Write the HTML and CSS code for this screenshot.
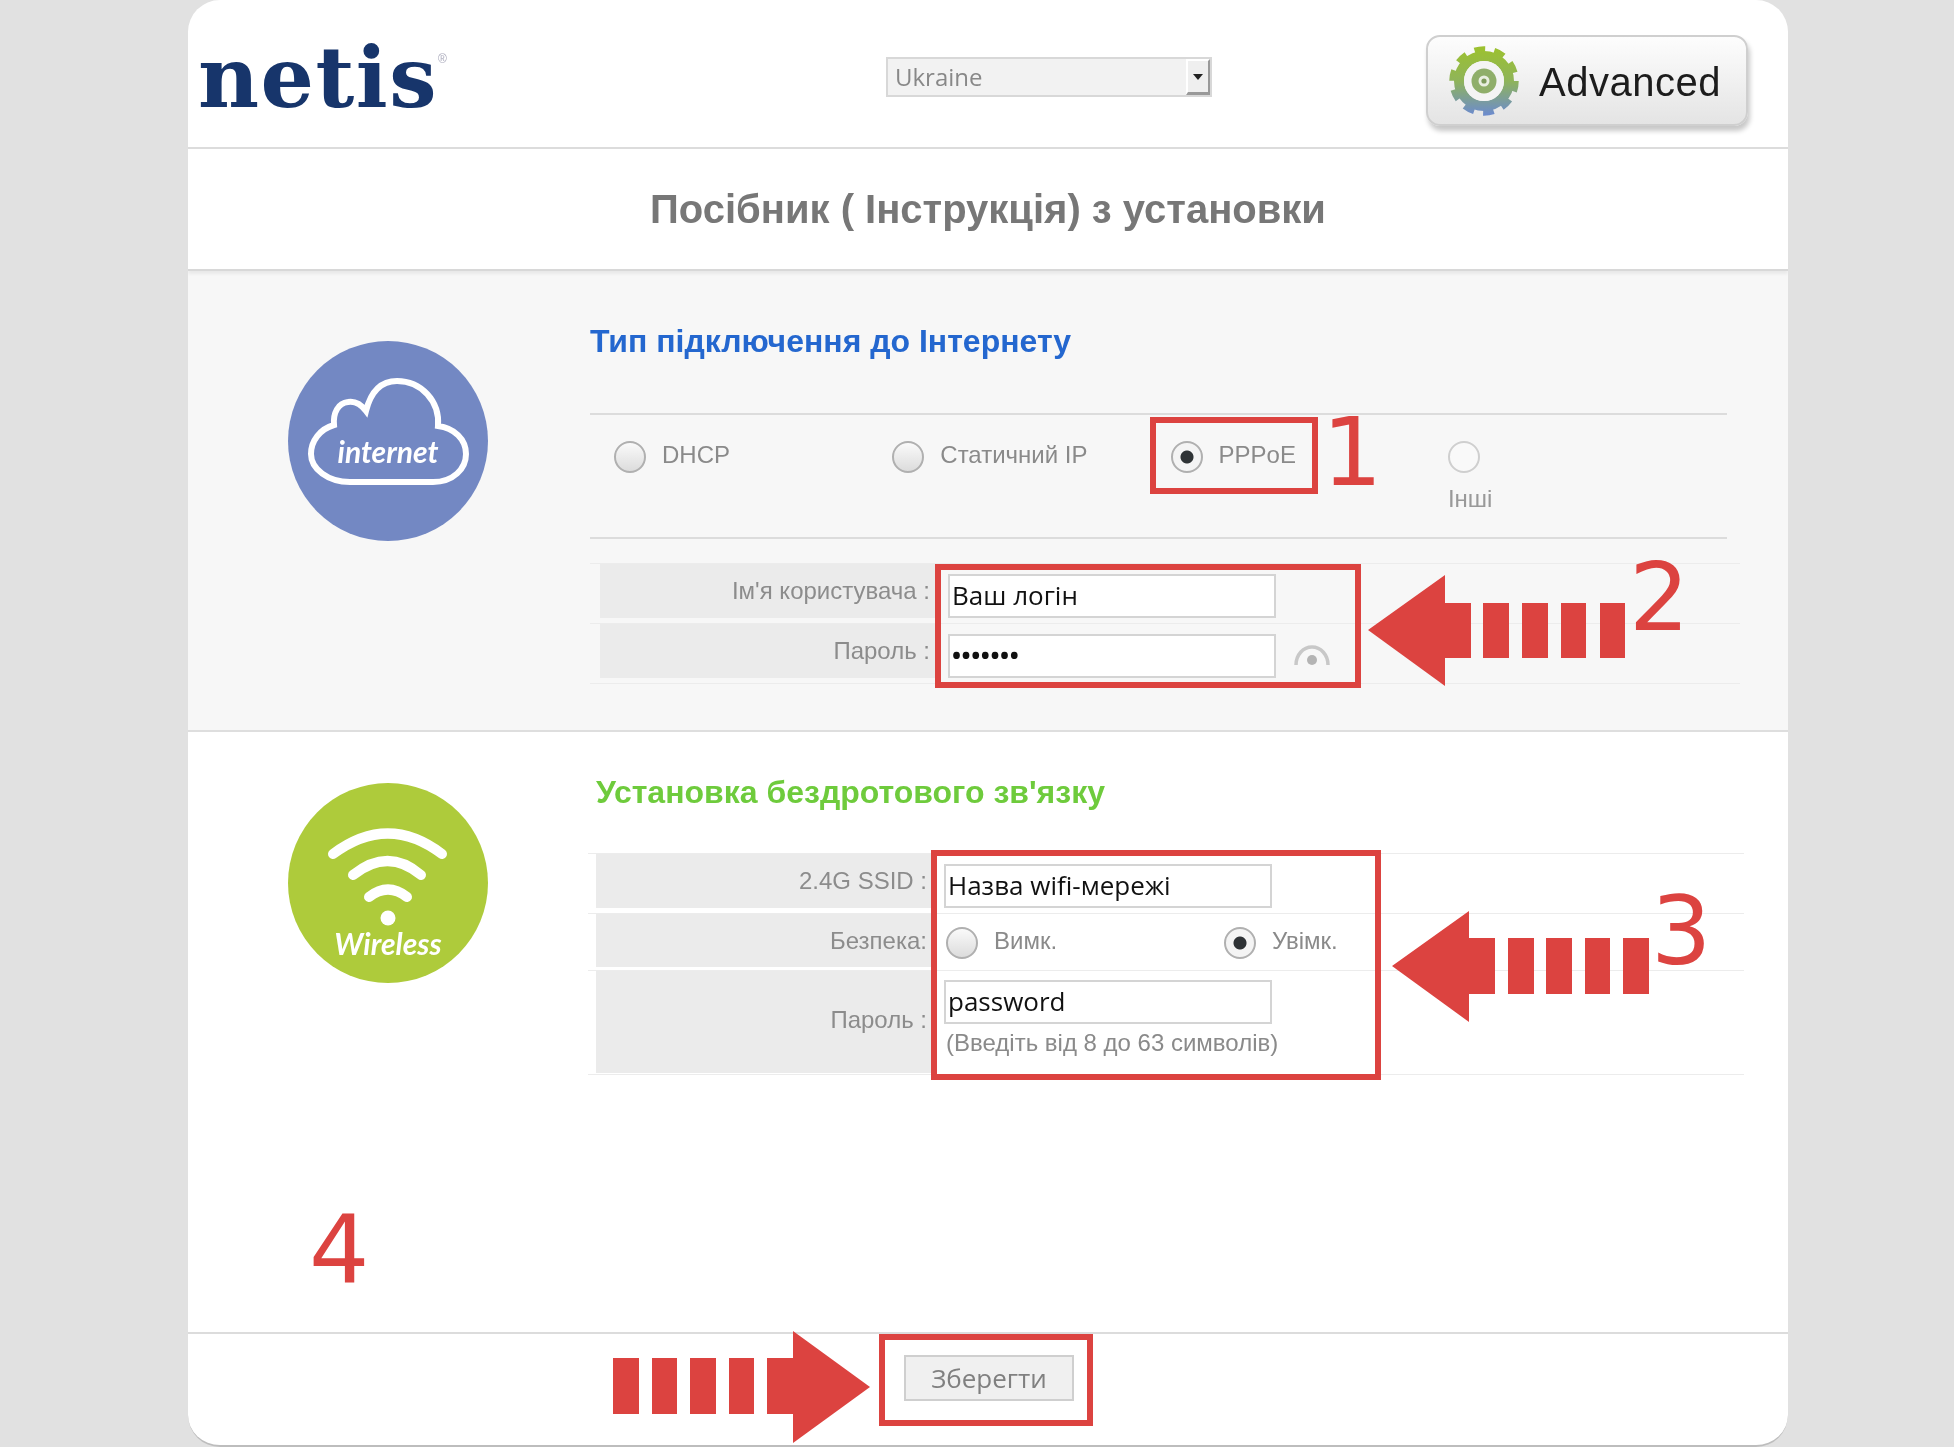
FILE: index.html
```html
<!DOCTYPE html>
<html lang="uk">
<head>
<meta charset="utf-8">
<title>netis</title>
<link rel="stylesheet" href="styles.css">
</head>
<body>
<main class="card">
  <header class="top">
    <div class="logo">netis<sup class="reg">®</sup></div>
    <div class="select"><span class="select-text">Ukraine</span><span class="select-btn"><i class="caret"></i></span></div>
    <button class="advanced" type="button">
      <svg class="gear" viewBox="0 0 70 70" aria-hidden="true">
        <defs>
          <linearGradient id="gearfill" gradientUnits="userSpaceOnUse" x1="0" y1="2" x2="0" y2="68">
            <stop offset="0" stop-color="#9cc130"/>
            <stop offset=".5" stop-color="#8fb45a"/>
            <stop offset="1" stop-color="#6d8ccb"/>
          </linearGradient>
        </defs>
        <circle cx="35" cy="35" r="31" fill="none" stroke="url(#gearfill)" stroke-width="7.5" stroke-dasharray="10.5 9"/>
        <circle cx="35" cy="35" r="25" fill="none" stroke="url(#gearfill)" stroke-width="10"/>
        <circle cx="35" cy="35" r="20" fill="#f4f4f4"/>
        <circle cx="35" cy="35" r="12.5" fill="#8fae6a"/>
        <circle cx="35" cy="35" r="5.5" fill="#e8eee0"/>
        <circle cx="35" cy="35" r="2.6" fill="#7d9a5c"/>
      </svg>
      <span class="advanced-text">Advanced</span>
    </button>
  </header>

  <h1 class="title">Посібник ( Інструкція) з установки</h1>

  <section class="panel panel-net">
    <svg class="badge" viewBox="0 0 200 200" aria-hidden="true">
      <circle cx="100" cy="100" r="100" fill="#7388c3"/>
      <path d="M62 141H145C165 141 178 128 178 113C178 98 166 87 150 85C152 60 133 40 109 40C94 40 83 50 78 70C72 62 66 60 60 61C50 62 45 72 46 84C32 88 23 100 23 113C23 128 40 141 62 141Z" fill="none" stroke="#fff" stroke-width="6"/>
      <text class="badge-text" x="100" y="122">internet</text>
    </svg>
    <div class="body body-net">
      <h2 class="heading heading-blue">Тип підключення до Інтернету</h2>
      <div class="modes">
        <label class="mode"><input class="radio" type="radio" name="wan"><span>DHCP</span></label>
        <label class="mode"><input class="radio" type="radio" name="wan"><span>Статичний IP</span></label>
        <label class="mode"><input class="radio" type="radio" name="wan" checked><span>PPPoE</span></label>
        <label class="mode mode-stack"><input class="radio radio-faint" type="radio" name="wan"><span>Інші</span></label>
      </div>
      <div class="rows">
        <div class="row row-net">
          <div class="key">Ім'я користувача :</div>
          <div class="val"><span class="field">Ваш логін</span></div>
        </div>
        <div class="row row-net">
          <div class="key">Пароль :</div>
          <div class="val val-eye">
            <span class="field field-dots">•••••••</span>
            <svg class="eye" viewBox="0 0 36 24" aria-hidden="true">
              <path d="M2 22C2 12 9 4 18 4S34 12 34 22" fill="none" stroke="#c8c8c8" stroke-width="3.5"/>
              <circle cx="18" cy="17" r="5" fill="#b4b4b4"/>
            </svg>
          </div>
        </div>
      </div>
    </div>
  </section>

  <section class="panel panel-wifi">
    <svg class="badge" viewBox="0 0 200 200" aria-hidden="true">
      <circle cx="100" cy="100" r="100" fill="#aecb3b"/>
      <g fill="none" stroke="#fff" stroke-width="10" stroke-linecap="round">
        <path d="M45 71Q100 30 154 71"/>
        <path d="M65 92Q100 64 133 92"/>
        <path d="M81 114Q100 99 119 114"/>
      </g>
      <circle cx="100" cy="135" r="7.5" fill="#fff"/>
      <text class="badge-text" x="100" y="172">Wireless</text>
    </svg>
    <div class="body body-wifi">
      <h2 class="heading heading-green">Установка бездротового зв'язку</h2>
      <div class="rows rows-wifi">
        <div class="row row-ssid">
          <div class="key">2.4G SSID :</div>
          <div class="val"><span class="field">Назва wifi-мережі</span></div>
        </div>
        <div class="row row-sec">
          <div class="key">Безпека:</div>
          <div class="val val-sec">
            <label class="mode mode-off"><input class="radio" type="radio" name="sec"><span>Вимк.</span></label>
            <label class="mode"><input class="radio" type="radio" name="sec" checked><span>Увімк.</span></label>
          </div>
        </div>
        <div class="row row-pass">
          <div class="key">Пароль :</div>
          <div class="val val-pass">
            <span class="field">password</span>
            <span class="hint">(Введіть від 8 до 63 символів)</span>
          </div>
        </div>
      </div>
    </div>
  </section>

  <footer class="bottom">
    <button class="save" type="button">Зберегти</button>
  </footer>

  <svg class="marks" viewBox="188 0 1600 1447" aria-hidden="true">
    <g fill="none" stroke="#dc4340" stroke-width="6">
      <rect x="1153" y="420" width="162" height="71"/>
      <rect x="938" y="567" width="420" height="118"/>
      <rect x="934" y="853" width="444" height="224"/>
      <rect x="882" y="1337" width="208" height="86"/>
    </g>
    <g fill="#dc4340">
      <path d="M1368 630L1445 575V603H1471V658H1445V686Z"/>
      <rect x="1483" y="603" width="26" height="55"/>
      <rect x="1522" y="603" width="26" height="55"/>
      <rect x="1561" y="603" width="25" height="55"/>
      <rect x="1600" y="603" width="25" height="55"/>
      <path d="M1392 966L1469 911V938H1495V994H1469V1022Z"/>
      <rect x="1508" y="938" width="26" height="56"/>
      <rect x="1546" y="938" width="26" height="56"/>
      <rect x="1585" y="938" width="25" height="56"/>
      <rect x="1623" y="938" width="26" height="56"/>
      <path d="M870 1387L793 1331V1358H767V1414H793V1443Z"/>
      <rect x="613" y="1358" width="26" height="56"/>
      <rect x="652" y="1358" width="25" height="56"/>
      <rect x="690" y="1358" width="26" height="56"/>
      <rect x="729" y="1358" width="25" height="56"/>
    </g>
  </svg>
  <span class="num num-1">1</span>
  <span class="num num-2">2</span>
  <span class="num num-3">3</span>
  <span class="num num-4">4</span>
</main>
</body>
</html>
```
FILE: styles.css
```css
* { box-sizing: border-box; }
html, body { margin: 0; height: 100%; }
body {
  background: #e1e1e1;
  overflow: hidden;
  font-family: "Liberation Sans", Arial, sans-serif;
  padding-left: 188px;
}
.card {
  position: relative;
  width: 1600px;
  height: 1447px;
  background: #fff;
  border-radius: 32px;
  overflow: hidden;
  display: flex;
  flex-direction: column;
  border-bottom: 2px solid #bdbdbd;
  filter: blur(.6px);
}

/* header */
.top {
  height: 149px;
  flex: none;
  border-bottom: 2px solid #dcdcdc;
  display: flex;
  align-items: flex-start;
}
.logo {
  width: 698px;
  padding: 28px 0 0 10px;
  font: 700 84px/100px "DejaVu Serif", serif;
  color: #17356b;
  letter-spacing: 1.5px;
  white-space: nowrap;
}
.reg {
  font: 400 12px/12px "Liberation Sans", sans-serif;
  color: #aab;
  vertical-align: 44px;
  letter-spacing: 0;
}
.select {
  width: 326px;
  height: 40px;
  margin-top: 57px;
  background: #f2f2f2;
  border: 2px solid #d8d8d8;
  display: flex;
  justify-content: space-between;
}
.select-text {
  font: 400 24px/36px "Open Sans", sans-serif;
  color: #888;
  padding-left: 7px;
}
.select-btn {
  width: 24px;
  height: 36px;
  background: #efefef;
  border-right: 2px solid #999;
  border-bottom: 3px solid #999;
  border-left: 2px solid #fff;
  border-top: 2px solid #fff;
  display: flex;
  align-items: center;
  justify-content: center;
}
.caret {
  width: 0;
  height: 0;
  border-left: 5px solid transparent;
  border-right: 5px solid transparent;
  border-top: 6px solid #222;
}
.advanced {
  width: 322px;
  height: 91px;
  margin: 35px 0 0 214px;
  padding: 0 0 0 21px;
  background: linear-gradient(#fdfdfd, #e4e4e4);
  border: 2px solid #cfcfcf;
  border-radius: 14px;
  box-shadow: 2px 5px 5px rgba(0, 0, 0, .22);
  display: flex;
  align-items: center;
  gap: 20px;
}
.gear { width: 70px; height: 70px; flex: none; margin-top: 1px; }
.advanced-text {
  font: 400 40px/48px "Liberation Sans", sans-serif;
  letter-spacing: .5px;
  color: #1c1c1c;
  margin-top: 2px;
}

/* title */
.title {
  flex: none;
  height: 122px;
  margin: 0;
  border-bottom: 2px solid #d8d8d8;
  box-shadow: 0 3px 3px rgba(0, 0, 0, .06);
  position: relative;
  text-align: center;
  font: 700 40px/120px "Liberation Sans", sans-serif;
  color: #777;
}

/* panels */
.panel {
  flex: none;
  display: flex;
  align-items: flex-start;
  padding-left: 100px;
}
.panel-net {
  height: 461px;
  background: #f7f7f7;
  border-bottom: 2px solid #dedede;
  padding-top: 70px;
}
.panel-wifi {
  height: 602px;
  padding-top: 51px;
  border-bottom: 2px solid #dcdcdc;
}
.badge { width: 200px; height: 200px; flex: none; }
.badge-text {
  font: italic 700 30px "Lato", sans-serif;
  fill: #fff;
  text-anchor: middle;
}
.body { display: flex; flex-direction: column; }
.body-net { width: 1150px; margin: -70px 0 0 102px; padding-top: 50px; }
.body-wifi { width: 1156px; margin: -51px 0 0 100px; padding-top: 40px; }
.heading {
  margin: 0;
  font: 700 32px/40px "Liberation Sans", sans-serif;
}
.heading-blue { color: #2467cf; height: 92px; }
.heading-green { color: #6ecb3c; height: 81px; padding-left: 8px; }

.modes {
  width: 1137px;
  height: 126px;
  border-top: 2px solid #dcdcdc;
  border-bottom: 2px solid #dcdcdc;
  padding: 26px 0 0 24px;
  display: grid;
  grid-template-columns: repeat(2, 278.3px) 277.3px 278.3px;
}
.mode {
  display: flex;
  align-items: flex-start;
  gap: 16px;
  font: 400 24px/28px "Liberation Sans", sans-serif;
  color: #8a8a8a;
}
.mode-stack { flex-direction: column; gap: 12px; color: #999; }
.radio {
  appearance: none;
  margin: 0;
  width: 32px;
  height: 32px;
  flex: none;
  border: 2px solid #b0b0b0;
  border-radius: 50%;
  background: linear-gradient(#fafafa, #dcdcdc);
}
.radio:checked {
  background: radial-gradient(circle, #2f3336 0 6px, #f4f4f4 7px 100%);
}
.radio-faint { border-color: #cfcfcf; background: #f9f9f9; }

.rows { margin-top: 24px; }
.rows-wifi { margin-top: 0; }
.row {
  display: flex;
  border-top: 1px solid #ececec;
  height: 60px;
}
.row-net:last-child { height: 61px; border-bottom: 1px solid #ececec; }
.key {
  height: 54px;
  width: 335px;
  margin-left: 10px;
  padding-right: 5px;
  background: #ebebeb;
  text-align: right;
  font: 400 24px/53px "Liberation Sans", sans-serif;
  color: #8c8c8c;
  white-space: nowrap;
}
.val { padding: 10px 0 0 13px; }
.val-eye { display: flex; align-items: flex-start; }
.field {
  display: block;
  width: 328px;
  height: 44px;
  padding-left: 2px;
  background: #fff;
  border: 2px solid #d4d4d4;
  font: 400 26px/38px "Open Sans", sans-serif;
  color: #111;
}
.field-dots { font-size: 24px; font-weight: 700; letter-spacing: .6px; line-height: 38px; }
.eye { width: 36px; height: 24px; margin: 9px 0 0 18px; }

.row-ssid .key, .row-sec .key, .row-pass .key { margin-left: 8px; width: 336px; }
.row-ssid .val, .row-pass .val { padding-left: 12px; }
.row-sec { height: 57px; }
.row-sec .key { height: 53px; }
.row-pass { height: 105px; border-bottom: 1px solid #ececec; }
.row-pass .key { height: 102px; line-height: 98px; }
.val-sec { padding: 13px 0 0 14px; display: flex; }
.mode-off { width: 278px; }
.val-pass { padding-top: 9px; }
.hint {
  display: block;
  margin: 4px 0 0 2px;
  font: 400 24px/30px "Liberation Sans", sans-serif;
  color: #8a8a8a;
  white-space: nowrap;
}

/* footer */
.bottom {
  flex: 1;
  padding: 21px 0 0 716px;
}
.save {
  width: 170px;
  height: 46px;
  background: #f0f0f0;
  border: 2px solid #cfcfcf;
  padding: 0;
  font: 400 26px/38px "Open Sans", sans-serif;
  color: #808080;
}

/* annotations laid over the screenshot */
.marks {
  position: absolute;
  left: 0;
  top: 0;
  width: 1600px;
  height: 1447px;
  pointer-events: none;
}
.num {
  position: absolute;
  font: 400 95px/110px "DejaVu Sans", sans-serif;
  color: #dc4340;
}
.num-1 { left: 1134px; top: 397px; }
.num-2 { left: 1441px; top: 542px; }
.num-3 { left: 1463px; top: 876px; }
.num-4 { left: 121px; top: 1194px; }
```
